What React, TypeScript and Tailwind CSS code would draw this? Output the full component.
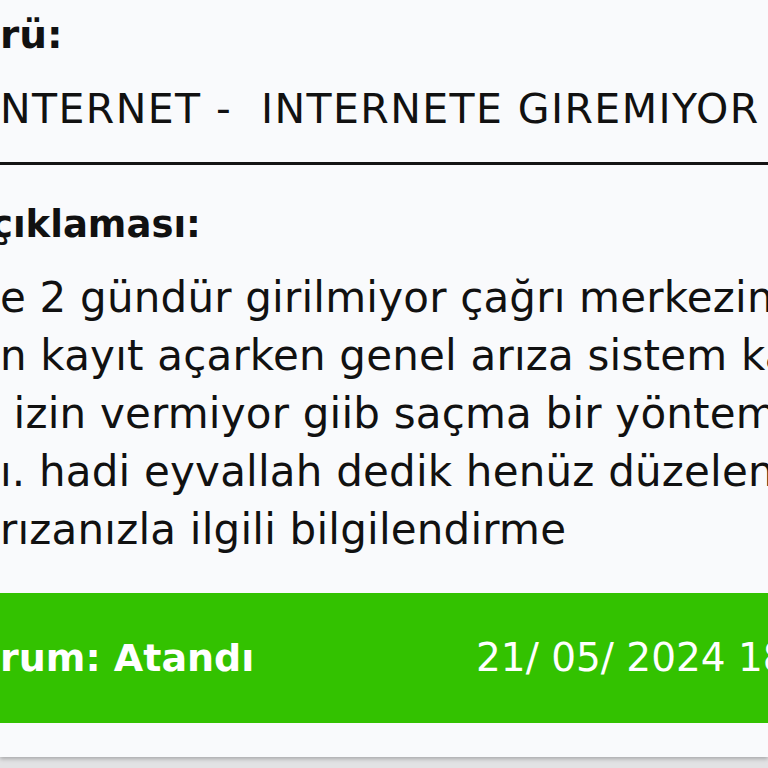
import React from 'react'

const bodyLines = [
  'e 2 gündür girilmiyor çağrı merkezine',
  'n kayıt açarken genel arıza sistem kayıt',
  ' izin vermiyor giib saçma bir yöntem',
  'ı. hadi eyvallah dedik henüz düzelen',
  'rızanızla ilgili bilgilendirme',
]

export default function App() {
  return (
    <div className="h-screen w-full overflow-hidden bg-[#e2e2e4]" style={{ fontFamily: '"DejaVu Sans", sans-serif' }}>
      <div className="h-[757px] w-full overflow-hidden bg-[#f9fafc] text-[#111] shadow-[0_2px_4px_rgba(0,0,0,0.25)] flex flex-col">
        <div className="mt-[14px] whitespace-nowrap text-[39px] font-bold leading-[42px]">rü:</div>
        <div className="mt-[28px] whitespace-pre text-[41px] leading-[50px] tracking-[1.4px]">NTERNET -  INTERNETE GIREMIYOR</div>
        <div className="mt-[28px] h-[3px] w-full bg-[#141414]" />
        <div className="mt-[39px] whitespace-nowrap text-[37px] font-bold leading-[42px] -ml-[9px]">çıklaması:</div>
        <div className="mt-[23px] flex flex-col">
          {bodyLines.map((l, i) => (
            <div key={i} className="whitespace-pre text-[42px] leading-[58px] tracking-[0.2px]">{l}</div>
          ))}
        </div>
        <div className="mt-[34px] h-[130px] w-full overflow-hidden bg-[#33c200] text-white grid grid-cols-[476px_1fr] items-center">
          <span className="whitespace-nowrap text-[38px] font-bold">rum: Atandı</span>
          <span className="whitespace-nowrap text-[39px]">21/ 05/ 2024 18:42</span>
        </div>
      </div>
    </div>
  )
}
